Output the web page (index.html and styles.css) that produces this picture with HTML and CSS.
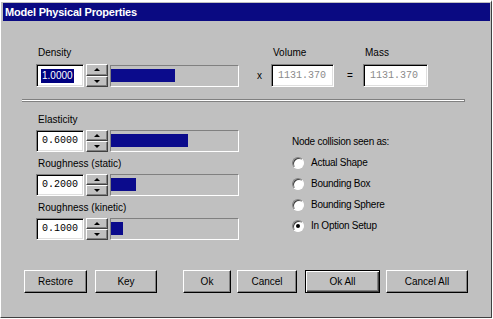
FILE: index.html
```html
<!DOCTYPE html>
<html lang="en">
<head>
    <meta charset="UTF-8">
    <meta name="viewport" content="width=device-width, initial-scale=1.0">
    <title>Model Physical Properties</title>

    <link rel="stylesheet" href="styles.css">
</head>
<body>
    <div class="window">
        <div class="titlebar">Model Physical Properties</div>

        <div class="top">
            <div class="field">
                <div class="label">Density</div>
                <div class="control">
                    <div class="edit tall"><span class="selected">1.0000</span></div>
                    <div class="spin tall">
                        <div class="spin-btn"><span class="arrow up"></span></div>
                        <div class="spin-btn"><span class="arrow down"></span></div>
                    </div>
                    <div class="track"><div class="fill" style="width: 64px"></div></div>
                </div>
            </div>
            <div class="sign times">x</div>
            <div class="field">
                <div class="label">Volume</div>
                <div class="readout volume">1131.370</div>
            </div>
            <div class="sign equals">=</div>
            <div class="field">
                <div class="label">Mass</div>
                <div class="readout mass">1131.370</div>
            </div>
        </div>

        <div class="separator"></div>

        <div class="lower">
            <div class="sliders">
                <div class="field">
                    <div class="label">Elasticity</div>
                    <div class="control">
                        <div class="edit">0.6000</div>
                        <div class="spin">
                            <div class="spin-btn"><span class="arrow up"></span></div>
                            <div class="spin-btn"><span class="arrow down"></span></div>
                        </div>
                        <div class="track"><div class="fill" style="width: 77px"></div></div>
                    </div>
                </div>
                <div class="field">
                    <div class="label">Roughness (static)</div>
                    <div class="control">
                        <div class="edit">0.2000</div>
                        <div class="spin">
                            <div class="spin-btn"><span class="arrow up"></span></div>
                            <div class="spin-btn"><span class="arrow down"></span></div>
                        </div>
                        <div class="track"><div class="fill" style="width: 25px"></div></div>
                    </div>
                </div>
                <div class="field">
                    <div class="label">Roughness (kinetic)</div>
                    <div class="control">
                        <div class="edit">0.1000</div>
                        <div class="spin">
                            <div class="spin-btn"><span class="arrow up"></span></div>
                            <div class="spin-btn"><span class="arrow down"></span></div>
                        </div>
                        <div class="track"><div class="fill" style="width: 12px"></div></div>
                    </div>
                </div>
            </div>

            <div class="collision">
                <div class="group-title">Node collision seen as:</div>
                <div class="radio"><span class="circle"></span>Actual Shape</div>
                <div class="radio"><span class="circle"></span>Bounding Box</div>
                <div class="radio"><span class="circle"></span>Bounding Sphere</div>
                <div class="radio"><span class="circle checked"></span>In Option Setup</div>
            </div>
        </div>

        <div class="buttons">
            <button class="btn restore">Restore</button>
            <button class="btn key">Key</button>
            <button class="btn ok">Ok</button>
            <button class="btn cancel">Cancel</button>
            <button class="btn okall">Ok All</button>
            <button class="btn cancelall">Cancel All</button>
        </div>
    </div>
</body>
</html>
```

FILE: styles.css
```css
*{
    font-family: "Liberation Sans", Arial, sans-serif;
    box-sizing: border-box;
}
body{
    margin: 0;
    background-color: #ffffff;
}
.window{
    width: 492px;
    height: 318px;
    background-color: #c0c0c0;
    border-top: 2px solid #ffffff;
    border-left: 1px solid #ffffff;
    border-right: 1px solid #404040;
    border-bottom: 1px solid #404040;
    padding: 1px 1px 0 2px;
    font-size: 10px;
    color: #000000;
}
.titlebar{
    height: 18px;
    line-height: 18px;
    padding-left: 2px;
    background-color: #0a0a82;
    color: #ffffff;
    font-size: 11px;
    font-weight: bold;
    letter-spacing: -0.2px;
}

/* density / volume / mass */
.top{
    display: flex;
    align-items: flex-end;
    padding: 25px 0 0 33px;
}
.label{
    height: 13px;
    line-height: 13px;
    padding-left: 2px;
    margin-bottom: 4px;
    white-space: nowrap;
}
.top .label{
    margin-bottom: 5px;
}
.control{
    display: flex;
    align-items: flex-start;
}
.edit, .readout{
    height: 22px;
    line-height: 18px;
    background-color: #ffffff;
    border: 1px solid;
    border-color: #808080 #ffffff #ffffff #808080;
    box-shadow: inset 1px 1px 0 #000000, inset -1px -1px 0 #dfdfdf;
    font-family: "Liberation Mono", "Courier New", monospace;
    font-size: 10px;
    padding: 1px 0 0 5px;
}
.edit{
    width: 48px;
}
.edit.tall, .readout{
    height: 23px;
    line-height: 19px;
}
.selected{
    background-color: #000080;
    color: #ffffff;
    padding: 1px 1px 2px 1px;
    margin-left: -1px;
}
.readout{
    color: #8a8a8a;
    padding-left: 6px;
}
.volume{
    width: 63px;
}
.mass{
    width: 65px;
}
.sign{
    height: 23px;
    line-height: 23px;
}
.times{
    width: 32px;
    padding-left: 18px;
}
.equals{
    width: 29px;
    padding-left: 13px;
}

.spin{
    width: 22px;
    height: 22px;
    margin-left: 2px;
    display: flex;
    flex-direction: column;
}
.spin.tall{
    height: 23px;
}
.spin-btn{
    flex: 1;
    display: flex;
    align-items: center;
    justify-content: center;
    background-color: #c0c0c0;
    border: 1px solid;
    border-color: #ffffff #404040 #404040 #ffffff;
    box-shadow: inset -1px -1px 0 #808080;
}
.arrow{
    width: 0;
    height: 0;
    border-left: 3px solid transparent;
    border-right: 3px solid transparent;
}
.arrow.up{
    border-bottom: 3px solid #000000;
}
.arrow.down{
    border-top: 3px solid #000000;
}

.track{
    width: 129px;
    height: 22px;
    margin-left: 2px;
    border: 1px solid;
    border-color: #808080 #ffffff #ffffff #808080;
    padding-top: 3px;
}
.top .track{
    margin-top: 1px;
}
.fill{
    height: 13px;
    background-color: #0b0b8c;
}

.separator{
    width: 443px;
    height: 3px;
    margin: 12px 0 0 19px;
    background-color: #ffffff;
    border-top: 1px solid #808080;
    border-bottom: 1px solid #808080;
    border-right: 1px solid #808080;
}

/* sliders and collision choice */
.lower{
    display: flex;
    padding: 11px 0 0 33px;
}
.sliders{
    width: 203px;
}
.sliders .field + .field{
    margin-top: 5px;
}
.collision{
    margin: 22px 0 0 53px;
    letter-spacing: -0.25px;
}
.group-title{
    height: 13px;
    line-height: 13px;
    margin-bottom: 4px;
}
.radio{
    height: 21px;
    display: flex;
    align-items: center;
}
.circle{
    width: 12px;
    height: 12px;
    margin-right: 7px;
    border-radius: 50%;
    background-color: #ffffff;
    border: 1px solid;
    border-color: #808080 #ffffff #ffffff #808080;
    box-shadow: inset 1px 1px 0 #404040;
    display: flex;
    align-items: center;
    justify-content: center;
}
.circle.checked::after{
    content: "";
    width: 4px;
    height: 4px;
    border-radius: 50%;
    background-color: #000000;
}

/* dialog buttons */
.buttons{
    display: flex;
    margin-top: 30px;
    padding-left: 21px;
}
.btn{
    height: 23px;
    padding: 0;
    background-color: #c0c0c0;
    border: 1px solid;
    border-color: #ffffff #000000 #000000 #ffffff;
    box-shadow: inset -1px -1px 0 #808080;
    font-size: 10px;
    color: #000000;
}
.restore{
    width: 63px;
}
.key{
    width: 62px;
    margin-left: 8px;
}
.ok{
    width: 48px;
    margin-left: 26px;
}
.cancel{
    width: 60px;
    margin-left: 6px;
}
.okall{
    width: 75px;
    margin-left: 8px;
    border: 1px solid #000000;
    box-shadow: inset 1px 1px 0 #ffffff, inset -1px -1px 0 #404040, inset -2px -2px 0 #808080;
}
.cancelall{
    width: 82px;
    margin-left: 6px;
}
```
